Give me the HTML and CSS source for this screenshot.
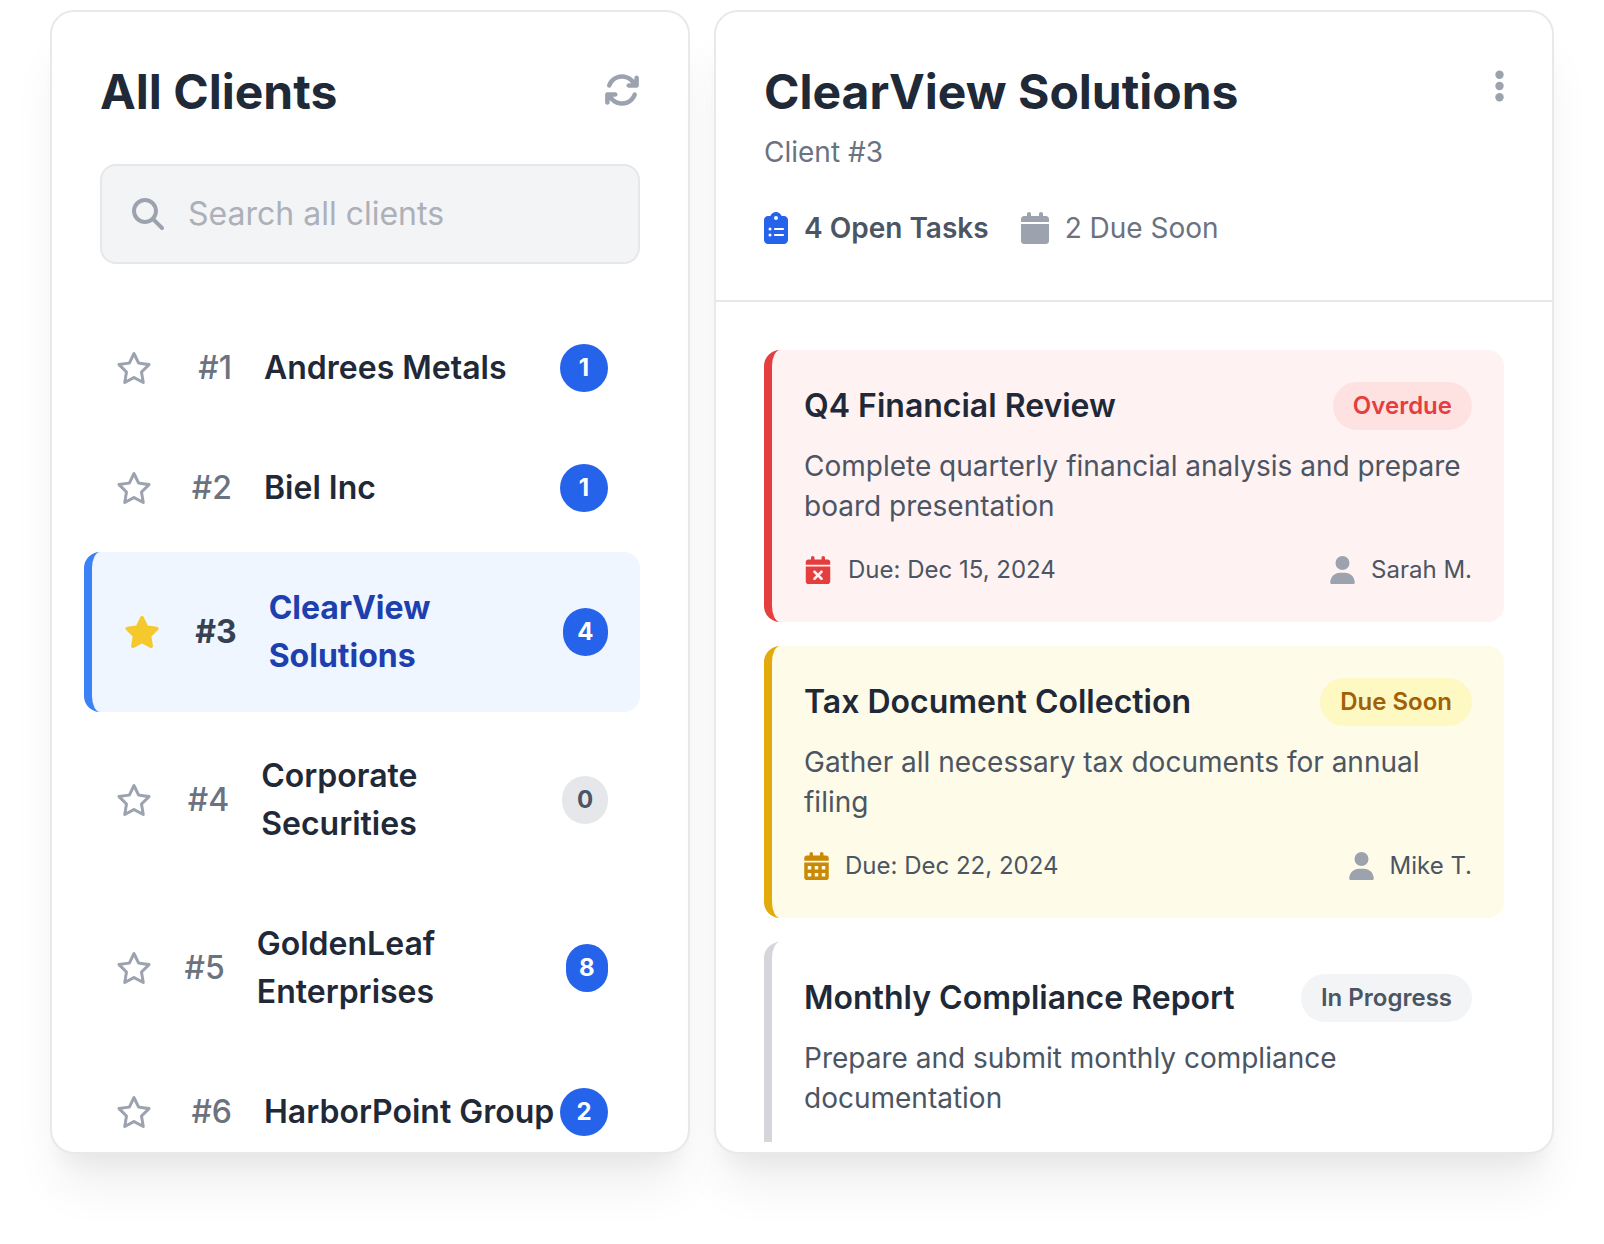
FILE: index.html
```html
<!DOCTYPE html>
<html lang="en">
<head>
    <meta charset="UTF-8">
    <meta name="viewport" content="width=device-width, initial-scale=1.0">
    <title>All Clients</title>
    <link rel="stylesheet" href="styles.css">
</head>
<body>
    <!-- Icon definitions -->
    <svg class="icon-defs" aria-hidden="true">
        <symbol id="icon-star" viewBox="0 0 576 512">
            <path d="M316.9 18C311.6 7 300.4 0 288.1 0s-23.4 7-28.8 18L195 150.3 51.4 171.5c-12 1.8-22 10.2-25.7 21.7s-.7 24.2 7.9 32.7L137.8 329 113.2 474.7c-2 12 3 24.2 12.9 31.3s23 8 33.8 2.3l128.3-68.5 128.3 68.5c10.8 5.7 23.9 4.9 33.8-2.3s14.9-19.3 12.9-31.3L438.5 329 542.7 225.9c8.6-8.5 11.7-21.2 7.9-32.7s-13.7-19.9-25.7-21.7L381.2 150.3 316.9 18z"/>
        </symbol>
        <symbol id="icon-star-outline" viewBox="0 0 576 512">
            <path d="M287.9 0c9.2 0 17.6 5.2 21.6 13.5l68.6 141.3 153.2 22.6c9 1.3 16.5 7.6 19.3 16.3s.5 18.1-5.9 24.5L433.6 328.4l26.2 155.6c1.5 9-2.2 18.1-9.7 23.5s-17.3 6-25.3 1.7l-137-73.2L151 509.1c-8.1 4.3-17.9 3.7-25.3-1.7s-11.2-14.5-9.7-23.5l26.2-155.6L31.1 218.2c-6.5-6.4-8.7-15.9-5.9-24.5s10.3-14.9 19.3-16.3l153.2-22.6L266.3 13.5C270.4 5.2 278.7 0 287.9 0zm0 79L235.4 187.2c-3.5 7.1-10.2 12.1-18.1 13.3L99 217.9 184.9 303c5.5 5.5 8.1 13.3 6.8 21L171.4 443.7l105.2-56.2c7.1-3.8 15.6-3.8 22.6 0l105.2 56.2L384.2 324.1c-1.3-7.7 1.2-15.5 6.8-21l85.9-85.1L358.6 200.5c-7.8-1.2-14.6-6.1-18.1-13.3L287.9 79z"/>
        </symbol>
        <symbol id="icon-search" viewBox="0 0 512 512">
            <path d="M416 208c0 45.9-14.9 88.3-40 122.7L502.6 457.4c12.5 12.5 12.5 32.8 0 45.3s-32.8 12.5-45.3 0L330.7 376c-34.4 25.2-76.8 40-122.7 40C93.1 416 0 322.9 0 208S93.1 0 208 0S416 93.1 416 208zM208 352a144 144 0 1 0 0-288 144 144 0 1 0 0 288z"/>
        </symbol>
        <symbol id="icon-refresh" viewBox="0 0 512 512">
            <path d="M105.1 202.6c7.7-21.8 20.2-42.3 37.8-59.8c62.5-62.5 163.8-62.5 226.3 0L386.3 160H352c-17.7 0-32 14.3-32 32s14.3 32 32 32H463.5h.4c17.7 0 32-14.3 32-32V80c0-17.7-14.3-32-32-32s-32 14.3-32 32v35.2L414.4 97.6c-87.5-87.5-229.3-87.5-316.8 0C73.2 122 55.6 150.7 44.8 181.4c-5.9 16.7 2.9 34.9 19.5 40.8s34.9-2.9 40.8-19.5zM39 289.3c-5 1.5-9.8 4.2-13.7 8.2c-4 4-6.7 8.8-8.1 14c-.3 1.2-.6 2.5-.8 3.8c-.3 1.7-.4 3.4-.4 5.1V432c0 17.7 14.3 32 32 32s32-14.3 32-32V396.9l17.6 17.5c87.5 87.4 229.3 87.4 316.7 0c24.4-24.4 42.1-53.1 52.9-83.7c5.9-16.7-2.9-34.9-19.5-40.8s-34.9 2.9-40.8 19.5c-7.7 21.8-20.2 42.3-37.8 59.8c-62.5 62.5-163.8 62.5-226.3 0l-.1-.1L125.6 352H160c17.7 0 32-14.3 32-32s-14.3-32-32-32H48.4c-1.6 0-3.2 .1-4.8 .3s-3.1 .5-4.6 1z"/>
        </symbol>
        <symbol id="icon-more" viewBox="0 0 128 512">
            <circle cx="64" cy="96" r="60"/>
            <circle cx="64" cy="256" r="60"/>
            <circle cx="64" cy="416" r="60"/>
        </symbol>
        <symbol id="icon-tasks" viewBox="0 0 384 512">
            <path d="M192 0c-41.8 0-77.4 26.7-90.5 64H64C28.7 64 0 92.7 0 128V448c0 35.3 28.7 64 64 64H320c35.3 0 64-28.7 64-64V128c0-35.3-28.7-64-64-64H282.5C269.4 26.7 233.8 0 192 0zm0 64a32 32 0 1 1 0 64 32 32 0 1 1 0-64zM72 272a24 24 0 1 1 48 0 24 24 0 1 1 -48 0zm104-16H304c8.8 0 16 7.2 16 16s-7.2 16-16 16H176c-8.8 0-16-7.2-16-16s7.2-16 16-16zM72 368a24 24 0 1 1 48 0 24 24 0 1 1 -48 0zm88 0c0-8.8 7.2-16 16-16H304c8.8 0 16 7.2 16 16s-7.2 16-16 16H176c-8.8 0-16-7.2-16-16z"/>
        </symbol>
        <symbol id="icon-calendar" viewBox="0 0 448 512">
            <path d="M96 32V64H48C21.5 64 0 85.5 0 112v48H448V112c0-26.5-21.5-48-48-48H352V32c0-17.7-14.3-32-32-32s-32 14.3-32 32V64H160V32c0-17.7-14.3-32-32-32S96 14.3 96 32zM448 192H0V464c0 26.5 21.5 48 48 48H400c26.5 0 48-21.5 48-48V192z"/>
        </symbol>
        <symbol id="icon-calendar-x" viewBox="0 0 448 512">
            <path fill-rule="evenodd" d="M128 0c17.7 0 32 14.3 32 32V64H288V32c0-17.7 14.3-32 32-32s32 14.3 32 32V64h48c26.5 0 48 21.5 48 48v48H0V112C0 85.5 21.5 64 48 64H96V32c0-17.7 14.3-32 32-32zM0 192H448V464c0 26.5-21.5 48-48 48H48c-26.5 0-48-21.5-48-48V192zM305 305c9.4-9.4 9.4-24.6 0-33.9s-24.6-9.4-33.9 0l-47 47-47-47c-9.4-9.4-24.6-9.4-33.9 0s-9.4 24.6 0 33.9l47 47-47 47c-9.4 9.4-9.4 24.6 0 33.9s24.6 9.4 33.9 0l47-47 47 47c9.4 9.4 24.6 9.4 33.9 0s9.4-24.6 0-33.9l-47-47 47-47z"/>
        </symbol>
        <symbol id="icon-calendar-days" viewBox="0 0 448 512">
            <path fill-rule="evenodd" d="M128 0c17.7 0 32 14.3 32 32V64H288V32c0-17.7 14.3-32 32-32s32 14.3 32 32V64h48c26.5 0 48 21.5 48 48v48H0V112C0 85.5 21.5 64 48 64H96V32c0-17.7 14.3-32 32-32zM0 192H448V464c0 26.5-21.5 48-48 48H48c-26.5 0-48-21.5-48-48V192zM64 256v64h64v-64zM192 256v64h64v-64zM320 256v64h64v-64zM64 384v64h64v-64zM192 384v64h64v-64zM320 384v64h64v-64z"/>
        </symbol>
        <symbol id="icon-user" viewBox="0 0 448 512">
            <path d="M224 256A128 128 0 1 0 224 0a128 128 0 1 0 0 256zm-45.7 48C79.8 304 0 383.8 0 482.3C0 498.7 13.3 512 29.7 512H418.3c16.4 0 29.7-13.3 29.7-29.7C448 383.8 368.2 304 269.7 304H178.3z"/>
        </symbol>
    </svg>

    <main class="layout">
        <!-- Client list -->
        <section class="card clients">
            <div class="card-top">
                <h1>All Clients</h1>
                <button type="button" class="icon-btn refresh-btn" aria-label="Refresh">
                    <svg><use href="#icon-refresh"/></svg>
                </button>
            </div>

            <label class="search" for="search">
                <svg aria-hidden="true"><use href="#icon-search"/></svg>
                <input type="text" id="search" placeholder="Search all clients" aria-label="Search all clients">
            </label>

            <ul class="client-list">
                <li class="client">
                    <div class="client-info">
                        <button type="button" class="star" aria-label="Favorite"><svg><use href="#icon-star-outline"/></svg></button>
                        <span class="client-number">#1</span>
                        <a href="#" class="client-name">Andrees Metals</a>
                    </div>
                    <span class="count">1</span>
                </li>
                <li class="client">
                    <div class="client-info">
                        <button type="button" class="star" aria-label="Favorite"><svg><use href="#icon-star-outline"/></svg></button>
                        <span class="client-number">#2</span>
                        <a href="#" class="client-name">Biel Inc</a>
                    </div>
                    <span class="count">1</span>
                </li>
                <li class="client active">
                    <div class="client-info">
                        <button type="button" class="star" aria-label="Favorite"><svg><use href="#icon-star"/></svg></button>
                        <span class="client-number">#3</span>
                        <a href="#" class="client-name">ClearView Solutions</a>
                    </div>
                    <span class="count">4</span>
                </li>
                <li class="client">
                    <div class="client-info">
                        <button type="button" class="star" aria-label="Favorite"><svg><use href="#icon-star-outline"/></svg></button>
                        <span class="client-number">#4</span>
                        <a href="#" class="client-name">Corporate Securities</a>
                    </div>
                    <span class="count empty">0</span>
                </li>
                <li class="client">
                    <div class="client-info">
                        <button type="button" class="star" aria-label="Favorite"><svg><use href="#icon-star-outline"/></svg></button>
                        <span class="client-number">#5</span>
                        <a href="#" class="client-name">GoldenLeaf Enterprises</a>
                    </div>
                    <span class="count">8</span>
                </li>
                <li class="client">
                    <div class="client-info">
                        <button type="button" class="star" aria-label="Favorite"><svg><use href="#icon-star-outline"/></svg></button>
                        <span class="client-number">#6</span>
                        <a href="#" class="client-name">HarborPoint Group</a>
                    </div>
                    <span class="count">2</span>
                </li>
            </ul>
        </section>

        <!-- Selected client -->
        <section class="card detail">
            <header class="detail-header">
                <div class="card-top">
                    <h2>ClearView Solutions</h2>
                    <button type="button" class="icon-btn more-btn" aria-label="More options">
                        <svg><use href="#icon-more"/></svg>
                    </button>
                </div>
                <p class="client-id">Client #3</p>
                <div class="stats">
                    <span class="stat open">
                        <svg class="icon-tasks"><use href="#icon-tasks"/></svg>
                        4 Open Tasks
                    </span>
                    <span class="stat">
                        <svg class="icon-calendar"><use href="#icon-calendar"/></svg>
                        2 Due Soon
                    </span>
                </div>
            </header>

            <div class="tasks">
                <article class="task overdue">
                    <div class="task-top">
                        <h3>Q4 Financial Review</h3>
                        <span class="status">Overdue</span>
                    </div>
                    <p>Complete quarterly financial analysis and prepare board presentation</p>
                    <div class="task-footer">
                        <span class="due"><svg><use href="#icon-calendar-x"/></svg>Due: Dec 15, 2024</span>
                        <span class="assignee"><svg><use href="#icon-user"/></svg>Sarah M.</span>
                    </div>
                </article>
                <article class="task due-soon">
                    <div class="task-top">
                        <h3>Tax Document Collection</h3>
                        <span class="status">Due Soon</span>
                    </div>
                    <p>Gather all necessary tax documents for annual filing</p>
                    <div class="task-footer">
                        <span class="due"><svg><use href="#icon-calendar-days"/></svg>Due: Dec 22, 2024</span>
                        <span class="assignee"><svg><use href="#icon-user"/></svg>Mike T.</span>
                    </div>
                </article>
                <article class="task">
                    <div class="task-top">
                        <h3>Monthly Compliance Report</h3>
                        <span class="status">In Progress</span>
                    </div>
                    <p>Prepare and submit monthly compliance documentation</p>
                    <div class="task-footer"></div>
                </article>
            </div>
        </section>
    </main>
</body>
</html>
```

FILE: styles.css
```css
* {
    box-sizing: border-box;
}
body {
    margin: 0;
    font-family: Inter, 'Liberation Sans', sans-serif;
    font-size: 32px;
    line-height: 48px;
    color: #1f2937;
    background-color: #fff;
}
h1, h2, h3, p, ul {
    margin: 0;
    padding: 0;
}
button {
    padding: 0;
    border: none;
    background: none;
    cursor: pointer;
}
a {
    color: inherit;
    text-decoration: none;
}
svg {
    display: block;
    flex-shrink: 0;
    fill: currentColor;
}
.icon-defs {
    display: none;
}

/* Layout */
.layout {
    display: grid;
    grid-template-columns: 16fr 21fr;
    gap: 24px;
    height: 100vh;
    padding: 10px 50px 90px;
}
.card {
    display: flex;
    flex-direction: column;
    min-width: 0;
    min-height: 0;
    overflow: hidden;
    background-color: #fff;
    border: 2px solid #e8e8ed;
    border-radius: 24px;
    box-shadow: 0 40px 50px -10px rgba(0, 0, 0, 0.07), 0 20px 20px -10px rgba(0, 0, 0, 0.04);
}
.card-top {
    display: flex;
    justify-content: space-between;
    align-items: flex-start;
}
h1, h2 {
    font-size: 48px;
    line-height: 64px;
    font-weight: 700;
}
.icon-btn {
    color: #9ca3af;
}
.icon-btn svg {
    height: 36px;
}
.refresh-btn {
    padding-top: 12px;
}
.refresh-btn svg {
    width: 36px;
}
.more-btn {
    padding-top: 8px;
}
.more-btn svg {
    width: 9px;
}

/* Client list */
.clients {
    padding: 48px 48px 0;
}
.search {
    display: flex;
    flex-shrink: 0;
    align-items: center;
    gap: 24px;
    margin-top: 40px;
    padding: 24px 30px;
    background-color: #f3f4f6;
    border: 2px solid #e5e7eb;
    border-radius: 16px;
}
.search svg {
    width: 32px;
    height: 32px;
    color: #9ca3af;
}
.search input {
    flex: 1;
    min-width: 0;
    height: 48px;
    padding: 0;
    border: none;
    outline: none;
    background: none;
    font: inherit;
    color: #1f2937;
}
.search input::placeholder {
    color: #adb0b8;
}
.client-list {
    display: flex;
    flex-direction: column;
    gap: 8px;
    min-height: 0;
    margin: 48px 0 0 -16px;
    overflow: hidden;
    list-style: none;
}
.client {
    display: flex;
    flex-shrink: 0;
    justify-content: space-between;
    align-items: center;
    padding: 32px;
    border-radius: 16px;
}
.client-info {
    display: flex;
    align-items: center;
}
.star {
    flex-shrink: 0;
    margin-right: 32px;
    color: #9ca3af;
}
.star svg {
    width: 36px;
    height: 32px;
}
.client-number {
    width: 48px;
    margin-right: 32px;
    text-align: right;
    font-weight: 500;
    color: #6b7280;
}
.client-name {
    font-weight: 600;
}
.count {
    display: flex;
    justify-content: center;
    align-items: center;
    width: 48px;
    height: 48px;
    border-radius: 24px;
    background-color: #2563eb;
    color: #fff;
    font-size: 24px;
    line-height: 32px;
    font-weight: 700;
}
.count.empty {
    background-color: #e5e7eb;
    color: #4b5563;
}
.client.active {
    background-color: #eff6ff;
    border-left: 8px solid #3b82f6;
}
.active .star {
    color: #f5c92c;
}
.active .client-number {
    font-weight: 700;
    color: #374151;
}
.active .client-name {
    font-weight: 700;
    color: #1e40af;
}

/* Client detail */
.detail {
    padding-bottom: 10px;
}
.detail-header {
    flex-shrink: 0;
    padding: 48px;
    border-bottom: 2px solid #e5e7eb;
}
.client-id {
    margin-top: 8px;
    font-size: 28px;
    line-height: 40px;
    color: #6b7280;
}
.stats {
    display: flex;
    gap: 32px;
    margin-top: 32px;
    font-size: 28px;
    color: #6b7280;
}
.stat {
    display: flex;
    align-items: center;
    gap: 16px;
}
.stat.open {
    font-weight: 600;
    color: #4b5563;
}
.icon-tasks {
    width: 24px;
    height: 32px;
    color: #2563eb;
}
.icon-calendar {
    width: 28px;
    height: 32px;
    color: #9ca3af;
}
.tasks {
    display: flex;
    flex-direction: column;
    gap: 24px;
    min-height: 0;
    padding: 48px 48px 0;
    overflow: hidden;
}
.task {
    flex-shrink: 0;
    padding: 32px;
    border-left: 8px solid #d5d6db;
    border-radius: 16px;
}
.task-top {
    display: flex;
    justify-content: space-between;
    align-items: center;
    gap: 16px;
}
h3 {
    font-size: 32px;
    line-height: 48px;
    font-weight: 600;
}
.status {
    flex-shrink: 0;
    padding: 8px 20px;
    border-radius: 24px;
    background-color: #f3f4f6;
    color: #4b5563;
    font-size: 24px;
    line-height: 32px;
    font-weight: 600;
}
.task p {
    margin-top: 16px;
    font-size: 28px;
    line-height: 40px;
    color: #4b5563;
}
.task-footer {
    display: flex;
    justify-content: space-between;
    height: 40px;
    margin-top: 24px;
    font-size: 24px;
    line-height: 32px;
    color: #4b5563;
}
.due, .assignee {
    display: flex;
    align-items: center;
    gap: 16px;
}
.task-footer svg {
    width: 25px;
    height: 28px;
}
.assignee svg {
    color: #9ca3af;
}
.overdue {
    background-color: #fef2f2;
    border-color: #e53e3e;
}
.overdue .status {
    background-color: #fee2e2;
    color: #e53e3e;
}
.overdue .due svg {
    width: 28px;
    color: #e53e3e;
}
.due-soon {
    background-color: #fefbe8;
    border-color: #e2ab0b;
}
.due-soon .status {
    background-color: #fef8c3;
    color: #a16207;
}
.due-soon .due svg {
    color: #ca8a04;
}
```
